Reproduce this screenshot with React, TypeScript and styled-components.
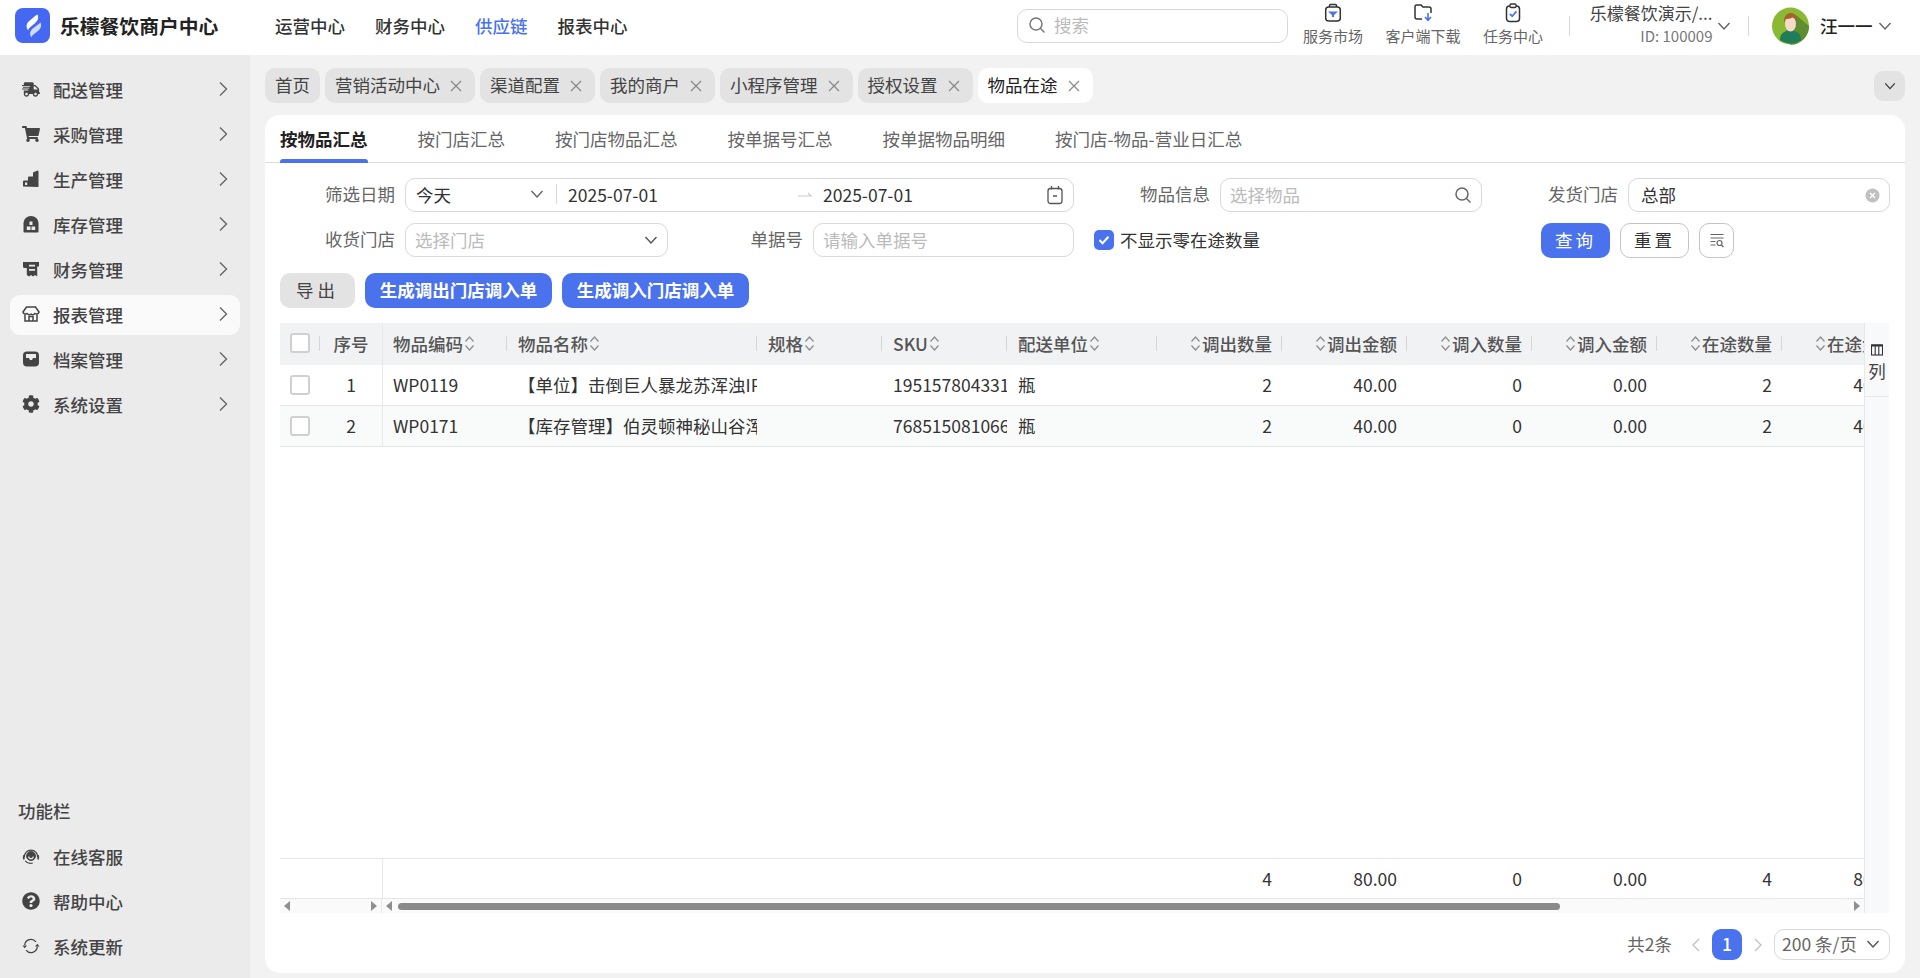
import React from "react";
import styled, { createGlobalStyle } from "styled-components";
import { FaShippingFast, FaShoppingCart, FaCog, FaQuestionCircle } from "react-icons/fa";

const BLUE = "#4a72ec";
const Global = createGlobalStyle`
  html, body { margin: 0; padding: 0; height: 100%; overflow: hidden; }
  body { font-family: "Noto Sans CJK SC", "Noto Sans", sans-serif; font-size: 17.5px; color: #333; background: #f2f3f5; }
  #root { height: 100%; }
  * { box-sizing: border-box; }
`;

const Page = styled.div`display: flex; flex-direction: column; height: 978px; width: 1920px; overflow: hidden;`;

/* ---------- top bar ---------- */
const TopBar = styled.header`height: 55px; flex: none; background: #fff; display: flex; align-items: center; padding: 0 0 4px 15px;`;
const Brand = styled.div`display: flex; align-items: center; gap: 10px; width: 260px; font-size: 19.8px; font-weight: 700; color: #222; white-space: nowrap;`;
const Nav = styled.nav`display: flex; gap: 30px;`;
const NavItem = styled.span<{ $active?: boolean }>`font-size: 17.5px; font-weight: 500; color: ${p => (p.$active ? BLUE : "#333")};`;
const TopRight = styled.div`margin-left: auto; display: flex; align-items: center;`;
const SearchBox = styled.div`width: 271px; height: 34px; border: 1px solid #d9d9d9; border-radius: 10px; display: flex; align-items: center; gap: 8px; padding: 0 0 2px 10px; color: #bbb; font-size: 17.5px; margin-right: 7px;`;
const Shortcut = styled.div`display: flex; flex-direction: column; align-items: center; width: 76px; margin-right: 14px; align-self: flex-start; padding-top: 1px; font-size: 15px; color: #666; line-height: 20px; white-space: nowrap; svg { display: block; margin-bottom: 3px; }`;
const VLine = styled.i`width: 1px; height: 20px; background: #d9d9d9; display: block;`;
const ShortcutEnd = styled(VLine)`margin-left: 4px;`;
const Org = styled.div`width: 127px; margin-left: 15.5px; display: flex; flex-direction: column; align-items: flex-end; font-size: 17px; line-height: 22px; color: #444; white-space: nowrap; margin-bottom: 3px;`;
const OrgId = styled.span`color: #777; font-size: 15px; margin-top: 1px;`;
const Chevron = styled.svg`flex: none;`;
const OrgCaret = styled.span`margin: 0 17px 0 4.5px; display: flex;`;
const AvatarSlot = styled.span`margin-left: 23px; display: flex;`;
const UserName = styled.span`font-size: 17.5px; font-weight: 500; color: #222; margin-left: 11px;`;
const UserCaret = styled.span`margin: 0 28.5px 0 5px; display: flex;`;

const Body = styled.div`flex: 1; display: flex; min-height: 0;`;

/* ---------- sidebar ---------- */
const Side = styled.aside`width: 250px; flex: none; background: #ebebeb; padding: 15px 10px 11px; display: flex; flex-direction: column;`;
const SideItem = styled.div<{ $active?: boolean; $last?: boolean }>`height: 40px; flex: none; margin-bottom: ${p => (p.$last ? 0 : 5)}px; border-radius: 10px; display: flex; align-items: center; padding: 0 8px 2px 12px; color: #444; background: ${p => (p.$active ? "#fafafa" : "transparent")}; font-size: 17.5px; font-weight: 500;`;
const SideIcon = styled.span`width: 18px; height: 18px; margin-right: 13px; display: flex; align-items: center; justify-content: center; color: #444; svg { display: block; }`;
const SideArrow = styled.span`margin-left: auto; display: flex; color: #666;`;
const SideSpacer = styled.div`flex: 1;`;
const SideTitle = styled.div`font-size: 17.5px; padding-left: 8px; color: #444; height: 30px; line-height: 28px; margin-bottom: 10px; font-weight: 500;`;

/* ---------- main ---------- */
const Main = styled.main`flex: 1; min-width: 0; display: flex; flex-direction: column; padding: 0 15px 5px; background: #f2f2f3;`;
const TabsBar = styled.div`height: 60px; flex: none; display: flex; align-items: flex-start; padding-top: 13px; gap: 5px; position: relative;`;
const PageTab = styled.div<{ $active?: boolean }>`height: 35px; padding: 0 10px 2px; border-radius: 10px; display: flex; align-items: center; gap: 10px; background: ${p => (p.$active ? "#fff" : "#e3e3e3")}; color: ${p => (p.$active ? "#222" : "#444")}; font-size: 17.5px; white-space: nowrap;`;
const TabClose = styled.svg`flex: none; color: #888; margin-left: 0; margin-right: 3px; position: relative; top: 1px;`;
const Collapse = styled.div`margin-left: auto; width: 31px; height: 30px; margin-top: 3px; border-radius: 9px; background: #e3e3e3; display: flex; align-items: center; justify-content: center;`;
const Card = styled.section`flex: 1; min-height: 0; background: #fff; border-radius: 15px; display: flex; flex-direction: column; padding-bottom: 13px;`;
const SubTabs = styled.div`height: 48px; flex: none; display: flex; gap: 50px; padding: 0 15px; border-bottom: 1px solid #dcdcdc; align-items: center;`;
const SubTab = styled.div<{ $active?: boolean }>`height: 48px; line-height: 48px; position: relative; font-size: 17.5px; color: ${p => (p.$active ? "#222" : "#666")}; font-weight: ${p => (p.$active ? 700 : 400)}; white-space: nowrap;
  ${p => p.$active && `&::after { content: ""; position: absolute; left: 0; right: 0; bottom: 0; height: 4px; background: ${BLUE}; border-radius: 3px 3px 0 0; }`}
`;
const Filters = styled.div`padding: 15px 0 0 15px; display: flex; flex-direction: column; gap: 11px; flex: none;`;
const FilterRow = styled.div`display: flex; align-items: flex-start;`;
const FieldLabel = styled.label<{ $w: number; $ml?: number }>`width: ${p => p.$w}px; margin: 0 10px 0 ${p => p.$ml ?? 0}px; flex: none; text-align: right; line-height: 32px; color: #666; white-space: nowrap;`;
const Control = styled.div<{ $w: number; $pl?: number }>`width: ${p => p.$w}px; height: 34px; flex: none; border: 1px solid #d9d9d9; border-radius: 10px; display: flex; align-items: center; padding: 0 9px 2px ${p => p.$pl ?? 9}px; position: relative; white-space: nowrap; color: #333;`;
const Placeholder = styled.span`color: #bbb;`;
const Push = styled.span`margin-left: auto; display: flex; align-items: center; position: relative; top: 1px;`;
const RangeSelect = styled.div`width: 141px; flex: none; display: flex; align-items: center; justify-content: space-between; padding-right: 12px; border-right: 1px solid #d9d9d9; height: 20px;`;
const DateText = styled.span<{ $w?: number; $ml?: number }>`width: ${p => (p.$w ? `${p.$w}px` : "auto")}; margin-left: ${p => p.$ml ?? 0}px; flex: none; color: #333;`;
const RangeArrow = styled.svg`margin: 0 10px 0 0; flex: none;`;
const CheckWrap = styled.div`margin-left: 20px; width: 447px; height: 34px; display: flex; align-items: center; gap: 6px; color: #333; flex: none; padding-bottom: 1px;`;
const CheckBlue = styled.span`width: 20px; height: 20px; border-radius: 5px; background: ${BLUE}; display: flex; align-items: center; justify-content: center;`;
const BtnGroup = styled.div`display: flex; gap: 10px;`;
const Btn = styled.button<{ $kind: "primary" | "ghost" | "gray"; $w?: number; $spaced?: number }>`
  height: 35px; border-radius: 10px; font-family: inherit; font-size: 17.5px; padding: 0 0 2px; white-space: nowrap;
  width: ${p => (p.$w ? `${p.$w}px` : "auto")};
  letter-spacing: ${p => p.$spaced ?? 0}px;
  ${p => p.$kind === "primary" && `background: ${BLUE}; color: #fff; border: none;`}
  ${p => p.$kind === "ghost" && `background: #fff; color: #333; border: 1px solid #c4c4c4;`}
  ${p => p.$kind === "gray" && `background: #e3e3e3; color: #444; border: none;`}
  display: flex; align-items: center; justify-content: center;
`;
const BoldBtnText = styled.span`font-weight: 700;`;
const Actions = styled.div`display: flex; gap: 10px; padding: 15px 0 0 15px; flex: none;`;

/* ---------- table ---------- */
const TableWrap = styled.div`margin: 15px 16px 0 15px; height: 590px; flex: none; display: flex;`;
const TableMain = styled.div`width: 1584px; flex: none; display: flex; flex-direction: column; overflow: hidden;`;
const RowBase = styled.div`display: flex; flex: none; width: 1627px;`;
const HeadRow = styled(RowBase)`height: 42px; background: #f1f2f4; font-weight: 500; color: #555;`;
const HeadCell = styled.div<{ $w: number; $num?: boolean; $center?: boolean; $fixEnd?: boolean; $noSep?: boolean }>`
  width: ${p => p.$w}px; flex: none; height: 42px; display: flex; align-items: center; position: relative; white-space: nowrap; gap: 1px;
  justify-content: ${p => (p.$num ? "flex-end" : p.$center ? "center" : "flex-start")};
  padding: 0 ${p => (p.$num ? 10 : 0)}px 2px ${p => (p.$num || p.$center ? 0 : 11)}px;
  ${p => p.$fixEnd && "box-shadow: 1px 0 0 #e8e8e8;"}
  ${p => !p.$noSep && `&::after { content: ""; position: absolute; right: 0; top: 13px; width: 1px; height: 15px; background: #d6d6d6; }`}
`;
const DataRow = styled(RowBase)<{ $alt?: boolean }>`height: 41px; background: ${p => (p.$alt ? "#f9fafa" : "#fff")}; border-bottom: 1px solid #e6e6e6;`;
const Cell = styled.div<{ $w: number; $num?: boolean; $center?: boolean; $fixEnd?: boolean }>`
  width: ${p => p.$w}px; flex: none; height: 100%; display: flex; align-items: center; white-space: nowrap; color: #333;
  overflow: ${p => (p.$fixEnd ? "visible" : "hidden")};
  justify-content: ${p => (p.$num ? "flex-end" : p.$center ? "center" : "flex-start")};
  padding: 0 ${p => (p.$num ? 10 : 0)}px 1px ${p => (p.$num || p.$center ? 0 : 11)}px;
  ${p => p.$fixEnd && "box-shadow: 1px 0 0 #e8e8e8;"}
`;
const Box = styled.span`width: 20px; height: 20px; border: 2px solid #d0d0d0; border-radius: 3px; background: #fff; display: block;`;
const TableGap = styled.div`flex: 1;`;
const SumRow = styled(RowBase)`height: 41px; border-top: 1px solid #e6e6e6; border-bottom: 1px solid #e6e6e6;`;
const ScrollRow = styled.div`height: 14px; flex: none; display: flex; background: #fafafa;`;
const FixedTrack = styled.div`width: 102px; flex: none; border-right: 1px solid #e8e8e8; display: flex; justify-content: space-between; align-items: center; padding: 0 3px;`;
const MainTrack = styled.div`flex: 1; display: flex; align-items: center; padding: 0 3px; position: relative;`;
const Thumb = styled.div`height: 7px; background: #8a8a8a; border-radius: 4px; width: 1162px; margin-left: 4.5px;`;
const TrackEnd = styled.span`margin-left: auto; display: flex;`;
const ColPanel = styled.div`width: 25px; flex: none; background: #f8f9fb; border-left: 1px solid #e8e8e8;`;
const ColBtn = styled.div`height: 74px; border-bottom: 1px solid #e8e8e8; padding-top: 21px; display: flex; flex-direction: column; align-items: center; color: #444; font-size: 17.5px; line-height: 24px; svg { display: block; margin-bottom: 3px; }`;

const Pager = styled.div`margin-top: 16px; padding-right: 15px; display: flex; justify-content: flex-end; align-items: center; height: 31px; flex: none; color: #666;`;
const Total = styled.span`margin-right: 17px; padding-bottom: 2px;`;
const PageNo = styled.span`width: 30px; height: 31px; border-radius: 9px; background: ${BLUE}; color: #fff; display: flex; align-items: center; justify-content: center; font-weight: 500; margin: 0 9px; padding-bottom: 2px;`;
const PageArrow = styled.svg`flex: none; color: #c0c0c0;`;
const PageSize = styled.div`width: 116px; height: 31px; margin-left: 9px; border: 1px solid #d9d9d9; border-radius: 10px; display: flex; align-items: center; justify-content: space-between; padding: 0 9px 2px 7px; color: #666; white-space: nowrap;`;

/* ---------- icons ---------- */
const Right = ({ s = 18 }: { s?: number }) => (
  <svg width={s} height={s} viewBox="0 0 18 18" fill="none" stroke="currentColor" strokeWidth="1.4"><path d="M6 2.5 12.5 9 6 15.5" /></svg>
);
const Down = ({ s = 14, c = "#666" }: { s?: number; c?: string }) => (
  <Chevron width={s} height={s} viewBox="0 0 14 14" fill="none" stroke={c} strokeWidth="1.4"><path d="M1.5 4 7 10l5.5-6" /></Chevron>
);
const Logo = () => (
  <svg width="35" height="35" viewBox="0 0 35 35">
    <rect width="35" height="35" rx="8" fill="#4468f2" />
    <path d="M22.5 6.5c1.6 3.6.3 6.3-2.6 8.7l-5 4.2c-1 .8-1.6 1.700-1.800 2.800-2.300-3.200-1.900-6.500.800-9l5.700-4.700c1.200-.900 2.200-1.900 2.900-2z" fill="#fff" />
    <path d="M25.500 14.500c1.500 3.300.400 6-2.300 8.200l-4.700 3.900c-1 .8-1.700 1.600-2 2.900-2.100-3-1.800-6 .700-8.400l5.500-4.400c1.200-.8 2.100-1.500 2.800-2.200z" fill="#cfdcff" />
  </svg>
);
const Avatar = () => (
  <svg width="37" height="38" viewBox="0 0 37 38">
    <circle cx="18.500" cy="19" r="18.500" fill="#8cb934" />
    <path d="M24 8 37 19a18.500 18.500 0 0 1-18 18.800L10 30z" fill="#5f8d30" />
    <path d="M8 33c0-6 3-8 7-9h7c4 1 7 3 7 9a18 18 0 0 1-21 0z" fill="#1f7d5a" />
    <ellipse cx="18.500" cy="16.500" rx="5.500" ry="8" fill="#f6dcc8" />
    <path d="M12.500 16c-1.500-6 2-10 6.500-10s7 4 5.500 10c-.5-3-2-5-4-5.500-2 1-5.500 1.500-6.500 1.500-.8 1-1.200 2.500-1.500 4z" fill="#a5622a" />
  </svg>
);
const BagIcon = () => (
  <svg width="20" height="20" viewBox="0 0 20 20" fill="none"><path d="M6.500 4V2.500a1 1 0 0 1 1-1h5a1 1 0 0 1 1 1V4" stroke="#333" strokeWidth="1.400" /><rect x="2.700" y="4" width="14.600" height="14" rx="3" stroke="#333" strokeWidth="1.500" /><path d="M5 8.500h10L11 12v2H9v-2z" fill={BLUE} /></svg>
);
const FolderIcon = () => (
  <svg width="20" height="20" viewBox="0 0 20 20" fill="none"><path d="M9 16H4a2 2 0 0 1-2-2V3.500a1.500 1.500 0 0 1 1.500-1.500H8l2 2h6a2 2 0 0 1 2 2v4" stroke="#333" strokeWidth="1.500" /><path d="M15 10v7m-3-3 3 3.300 3-3.300" stroke={BLUE} strokeWidth="1.600" /></svg>
);
const ClipIcon = () => (
  <svg width="20" height="20" viewBox="0 0 20 20" fill="none"><rect x="3.500" y="3" width="13" height="15.500" rx="3" stroke="#333" strokeWidth="1.500" /><rect x="7" y="1" width="6" height="3.500" rx="1" fill="#fff" stroke="#333" strokeWidth="1.300" /><path d="m6.800 10.800 2.400 2.400 4.200-4.800" stroke={BLUE} strokeWidth="1.700" /></svg>
);
const Glass = ({ c = "#777", s = 18 }: { c?: string; s?: number }) => (
  <svg width={s} height={s} viewBox="0 0 18 18" fill="none" stroke={c} strokeWidth="1.500" style={{ flex: "none" }}><circle cx="8" cy="8" r="6" /><path d="m12.500 12.500 4 4" /></svg>
);
const Close = () => (
  <TabClose width="12" height="12" viewBox="0 0 12 12" fill="none" stroke="currentColor" strokeWidth="1.200"><path d="m1 1 10 10M11 1 1 11" /></TabClose>
);
const Stairs = () => (
  <svg width="18" height="18" viewBox="0 0 18 18"><path d="M1 16.500v-5a1 1 0 0 1 1-1h4V7.500a1 1 0 0 1 1-1h4V3a1 1 0 0 1 .4-.8l3.600-1.500a1 1 0 0 1 1.500.8v15.500z" fill="currentColor" /><rect x="3" y="12.500" width="2.200" height="2.500" fill="#ebebeb" /></svg>
);
const Warehouse = () => (
  <svg width="18" height="18" viewBox="0 0 18 18"><path d="M1.500 16.500V8.500C1.500 4 5 1 9 1s7.500 3 7.500 7.500v8a1 1 0 0 1-1 1h-13a1 1 0 0 1-1-1z" fill="currentColor" /><path d="M7.500 6.500h3V10h-3zM4.800 11.500h3.700V15H4.800zM9.500 11.500h3.700V15H9.500z" fill="#ebebeb" /></svg>
);
const Receipt = () => (
  <svg width="18" height="18" viewBox="0 0 18 18"><path d="M1 2h16v4.500h-1.800V16.500l-2.200-1.500-2 1.500-2-1.500-2 1.500L4.800 15V8H2.500A1.500 1.500 0 0 1 1 6.500z" fill="currentColor" /><path d="M7 4.800h6v1.800H7zM7 9h6v1.800H7z" fill="#ebebeb" /></svg>
);
const Store = () => (
  <svg width="18" height="18" viewBox="0 0 18 18" fill="none" stroke="currentColor" strokeWidth="1.500"><path d="M4.500 2h9L17 7a2.500 2.500 0 0 1-4 1.500 3 3 0 0 1-4 .500 3 3 0 0 1-4-.500A2.500 2.500 0 0 1 1 7z" /><path d="M3 9.500V16h12V9.500M7 16v-4.500h4V16" /></svg>
);
const Inbox = () => (
  <svg width="18" height="18" viewBox="0 0 18 18"><rect x="1" y="1.500" width="16" height="15" rx="4" fill="currentColor" /><path d="M4 4h10v4h-3l-1 2H8L7 8H4z" fill="#ebebeb" /></svg>
);
const Service = () => (
  <svg width="20" height="18" viewBox="0 0 20 18" fill="none" stroke="currentColor"><path d="M2.500 10a7.500 7.500 0 0 1 15 0" strokeWidth="1.500" /><path d="M3.500 14.500A8 8 0 0 0 12 16.800" strokeWidth="1.300" /><circle cx="10" cy="9" r="5" fill="currentColor" /><path d="M7.500 9.500a2.500 2.500 0 0 0 5 0" stroke="#ebebeb" strokeWidth="1.300" /><rect x="1" y="8" width="2" height="5" rx="1" fill="currentColor" stroke="none" /><rect x="17" y="8" width="2" height="5" rx="1" fill="currentColor" stroke="none" /></svg>
);
const Refresh = () => (
  <svg width="20" height="18" viewBox="0 0 20 18" fill="none" stroke="currentColor" strokeWidth="1.400"><path d="M3 8a7 7 0 0 1 12.500-3.500" /><path d="M17 10a7 7 0 0 1-12.500 3.500" /><path d="M0.500 8.500h5L3 11.500zM14.500 9.500h5L17 6.500z" fill="currentColor" stroke="none" /></svg>
);
const Sort = () => (
  <svg width="11" height="17" viewBox="0 0 11 17" fill="none" stroke="#8c8c8c" strokeWidth="1.200" style={{ flex: "none" }}><path d="m1.500 6.500 4-4.500 4 4.500M1.500 10.500l4 4.500 4-4.500" /></svg>
);
const Tri = ({ dir }: { dir: "l" | "r" }) => (
  <svg width="8" height="10" viewBox="0 0 8 10" fill="#8f8f8f">{dir === "l" ? <path d="M7 0v10L1 5z" /> : <path d="M1 0v10l6-5z" />}</svg>
);

const head: { t: string; w: number; num?: boolean }[] = [
  { t: "物品编码", w: 125 }, { t: "物品名称", w: 250 }, { t: "规格", w: 125 }, { t: "SKU", w: 125 }, { t: "配送单位", w: 150 },
  { t: "调出数量", w: 125, num: true }, { t: "调出金额", w: 125, num: true }, { t: "调入数量", w: 125, num: true },
  { t: "调入金额", w: 125, num: true }, { t: "在途数量", w: 125, num: true }, { t: "在途金额", w: 125, num: true },
];
const nums = [125, 125, 125, 125, 125, 125];
const rows = [
  { n: "1", code: "WP0119", name: "【单位】击倒巨人暴龙苏浑浊IPA啤酒", sku: "195157804331", v: ["2", "40.00", "0", "0.00", "2", "40.00"] },
  { n: "2", code: "WP0171", name: "【库存管理】伯灵顿神秘山谷浑浊IPA", sku: "768515081066", v: ["2", "40.00", "0", "0.00", "2", "40.00"] },
];
const sumVals = ["4", "80.00", "0", "0.00", "4", "80.00"];
const menu: [string, React.ReactNode, boolean?][] = [
  ["配送管理", <FaShippingFast size={19} />],
  ["采购管理", <FaShoppingCart size={18} />],
  ["生产管理", <Stairs />],
  ["库存管理", <Warehouse />],
  ["财务管理", <Receipt />],
  ["报表管理", <Store />, true],
  ["档案管理", <Inbox />],
  ["系统设置", <FaCog size={18} />],
];
const tabs = ["营销活动中心", "渠道配置", "我的商户", "小程序管理", "授权设置"];
const subTabs = ["按物品汇总", "按门店汇总", "按门店物品汇总", "按单据号汇总", "按单据物品明细", "按门店-物品-营业日汇总"];

export default function App() {
  return (
    <Page>
      <Global />
      <TopBar>
        <Brand><Logo />乐檬餐饮商户中心</Brand>
        <Nav>
          <NavItem>运营中心</NavItem>
          <NavItem>财务中心</NavItem>
          <NavItem $active>供应链</NavItem>
          <NavItem>报表中心</NavItem>
        </Nav>
        <TopRight>
          <SearchBox><Glass />搜索</SearchBox>
          <Shortcut><BagIcon />服务市场</Shortcut>
          <Shortcut><FolderIcon />客户端下载</Shortcut>
          <Shortcut><ClipIcon />任务中心</Shortcut>
          <ShortcutEnd />
          <Org>乐檬餐饮演示/...<OrgId>ID: 100009</OrgId></Org>
          <OrgCaret><Down /></OrgCaret>
          <VLine />
          <AvatarSlot><Avatar /></AvatarSlot>
          <UserName>汪一一</UserName>
          <UserCaret><Down /></UserCaret>
        </TopRight>
      </TopBar>
      <Body>
        <Side>
          {menu.map(([t, ic, a]) => (
            <SideItem key={t} $active={a}>
              <SideIcon>{ic}</SideIcon>{t}
              <SideArrow><Right /></SideArrow>
            </SideItem>
          ))}
          <SideSpacer />
          <SideTitle>功能栏</SideTitle>
          <SideItem><SideIcon><Service /></SideIcon>在线客服</SideItem>
          <SideItem><SideIcon><FaQuestionCircle size={18} /></SideIcon>帮助中心</SideItem>
          <SideItem $last><SideIcon><Refresh /></SideIcon>系统更新</SideItem>
        </Side>
        <Main>
          <TabsBar>
            <PageTab>首页</PageTab>
            {tabs.map(t => <PageTab key={t}>{t}<Close /></PageTab>)}
            <PageTab $active>物品在途<Close /></PageTab>
            <Collapse><Down s={12} c="#333" /></Collapse>
          </TabsBar>
          <Card>
            <SubTabs>
              {subTabs.map((t, i) => <SubTab key={t} $active={i === 0}>{t}</SubTab>)}
            </SubTabs>
            <Filters>
              <FilterRow>
                <FieldLabel $w={115}>筛选日期</FieldLabel>
                <Control $w={669} $pl={10}>
                  <RangeSelect>今天<Down /></RangeSelect>
                  <DateText $w={229} $ml={11}>2025-07-01</DateText>
                  <RangeArrow width="16" height="10" viewBox="0 0 16 10" fill="none" stroke="#ccc" strokeWidth="1.200"><path d="M1 7h13L11 4" /></RangeArrow>
                  <DateText>2025-07-01</DateText>
                  <Push>
                    <svg width="18" height="20" viewBox="0 0 18 20" fill="none" stroke="#555" strokeWidth="1.300"><rect x="2" y="3.500" width="14" height="15" rx="2.500" /><path d="M5.500 1v3.500M12.500 1v3.500M7 11h4" /></svg>
                  </Push>
                </Control>
                <FieldLabel $w={126} $ml={10}>物品信息</FieldLabel>
                <Control $w={262}>
                  <Placeholder>选择物品</Placeholder>
                  <Push><Glass c="#666" /></Push>
                </Control>
                <FieldLabel $w={126} $ml={10}>发货门店</FieldLabel>
                <Control $w={262} $pl={12}>
                  总部
                  <Push>
                    <svg width="15" height="15" viewBox="0 0 15 15"><circle cx="7.500" cy="7.500" r="7" fill="#c0c0c0" /><path d="m5 5 5 5m0-5-5 5" stroke="#fff" strokeWidth="1.400" /></svg>
                  </Push>
                </Control>
              </FilterRow>
              <FilterRow>
                <FieldLabel $w={115}>收货门店</FieldLabel>
                <Control $w={263}>
                  <Placeholder>选择门店</Placeholder>
                  <Push><Down s={14} c="#555" /></Push>
                </Control>
                <FieldLabel $w={135}>单据号</FieldLabel>
                <Control $w={261}><Placeholder>请输入单据号</Placeholder></Control>
                <CheckWrap>
                  <CheckBlue>
                    <svg width="14" height="14" viewBox="0 0 14 14" fill="none" stroke="#fff" strokeWidth="2"><path d="m2.500 7 3 3.200 6-6.500" /></svg>
                  </CheckBlue>
                  不显示零在途数量
                </CheckWrap>
                <BtnGroup>
                  <Btn $kind="primary" $w={69} $spaced={3}>查询</Btn>
                  <Btn $kind="ghost" $w={69} $spaced={3}>重置</Btn>
                  <Btn $kind="ghost" $w={35}>
                    <svg width="16" height="16" viewBox="0 0 16 16" fill="none" stroke="#666" strokeWidth="1.200"><path d="M1.500 2.500h13M1.500 6h13M1.500 9.500h5M1.500 13h5" /><circle cx="10.500" cy="11" r="2.500" /><path d="m12.500 13 2 2" /></svg>
                  </Btn>
                </BtnGroup>
              </FilterRow>
            </Filters>
            <Actions>
              <Btn $kind="gray" $w={75} $spaced={4}>导出</Btn>
              <Btn $kind="primary" $w={187}><BoldBtnText>生成调出门店调入单</BoldBtnText></Btn>
              <Btn $kind="primary" $w={187}><BoldBtnText>生成调入门店调入单</BoldBtnText></Btn>
            </Actions>
            <TableWrap>
              <TableMain>
                <HeadRow>
                  <HeadCell $w={40} $center><Box /></HeadCell>
                  <HeadCell $w={62} $center $fixEnd $noSep>序号</HeadCell>
                  {head.map(h => (
                    <HeadCell key={h.t} $w={h.w} $num={h.num}>
                      {h.num ? <><Sort />{h.t}</> : <>{h.t}<Sort /></>}
                    </HeadCell>
                  ))}
                </HeadRow>
                {rows.map((r, i) => (
                  <DataRow key={r.n} $alt={i === 1}>
                    <Cell $w={40} $center><Box /></Cell>
                    <Cell $w={62} $center $fixEnd>{r.n}</Cell>
                    <Cell $w={125}>{r.code}</Cell>
                    <Cell $w={250}>{r.name}</Cell>
                    <Cell $w={125} />
                    <Cell $w={125}>{r.sku}</Cell>
                    <Cell $w={150}>瓶</Cell>
                    {r.v.map((v, j) => <Cell key={j} $w={nums[j]} $num>{v}</Cell>)}
                  </DataRow>
                ))}
                <TableGap />
                <SumRow>
                  <Cell $w={40} />
                  <Cell $w={62} $fixEnd />
                  <Cell $w={775} />
                  {sumVals.map((v, j) => <Cell key={j} $w={nums[j]} $num>{v}</Cell>)}
                </SumRow>
                <ScrollRow>
                  <FixedTrack><Tri dir="l" /><Tri dir="r" /></FixedTrack>
                  <MainTrack>
                    <Tri dir="l" />
                    <Thumb />
                    <TrackEnd><Tri dir="r" /></TrackEnd>
                  </MainTrack>
                </ScrollRow>
              </TableMain>
              <ColPanel>
                <ColBtn>
                  <svg width="12" height="12" viewBox="0 0 12 12" fill="none" stroke="#333" strokeWidth="1.100"><rect x="0.500" y="1" width="11" height="10" /><path d="M4.200 1v10M7.800 1v10" /><path d="M0.500 1.500h11" strokeWidth="2" /></svg>
                  列
                </ColBtn>
              </ColPanel>
            </TableWrap>
            <Pager>
              <Total>共2条</Total>
              <PageArrow width="14" height="16" viewBox="0 0 14 16" fill="none" stroke="currentColor" strokeWidth="1.300"><path d="M10 2 4 8l6 6" /></PageArrow>
              <PageNo>1</PageNo>
              <PageArrow width="14" height="16" viewBox="0 0 14 16" fill="none" stroke="currentColor" strokeWidth="1.300"><path d="m4 2 6 6-6 6" /></PageArrow>
              <PageSize>200 条/页<Down s={14} c="#555" /></PageSize>
            </Pager>
          </Card>
        </Main>
      </Body>
    </Page>
  );
}
